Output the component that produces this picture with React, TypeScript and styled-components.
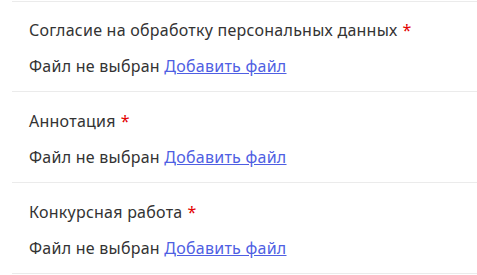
import styled, { createGlobalStyle } from 'styled-components';

const GlobalStyle = createGlobalStyle`
	body {
		margin: 0;
		background: #ffffff;
		font-family: 'Noto Sans', 'Open Sans', sans-serif;
	}
`;

const List = styled.div`
	padding: 1px 0 0 12px;
`;

const Field = styled.div`
	display: flex;
	flex-direction: column;
	gap: 12px;
	padding: 16px 17px 13px;
	border-top: 1px solid #ebebeb;
	&:last-child {
		border-bottom: 1px solid #ebebeb;
	}
	& + & {
		padding-top: 17px;
	}
`;

const Label = styled.div`
	font-size: 16px;
	line-height: 24px;
	letter-spacing: 0.25px;
	color: #333333;
`;

const Required = styled.span`
	color: #e30000;
	margin-left: 5px;
`;

const FileRow = styled.div`
	font-size: 16px;
	line-height: 24px;
	letter-spacing: 0.25px;
	color: #333333;
`;

const AddLink = styled.a`
	color: #4f5fe3;
	text-decoration: underline;
	cursor: pointer;
`;

const fields = ['Согласие на обработку персональных данных', 'Аннотация', 'Конкурсная работа'];

function App(): JSX.Element {
	return (
		<>
			<GlobalStyle />
			<List>
				{fields.map((name) => (
					<Field key={name}>
						<Label>
							{name}
							<Required>*</Required>
						</Label>
						<FileRow>
							Файл не выбран <AddLink>Добавить файл</AddLink>
						</FileRow>
					</Field>
				))}
			</List>
		</>
	);
}

export default App;
